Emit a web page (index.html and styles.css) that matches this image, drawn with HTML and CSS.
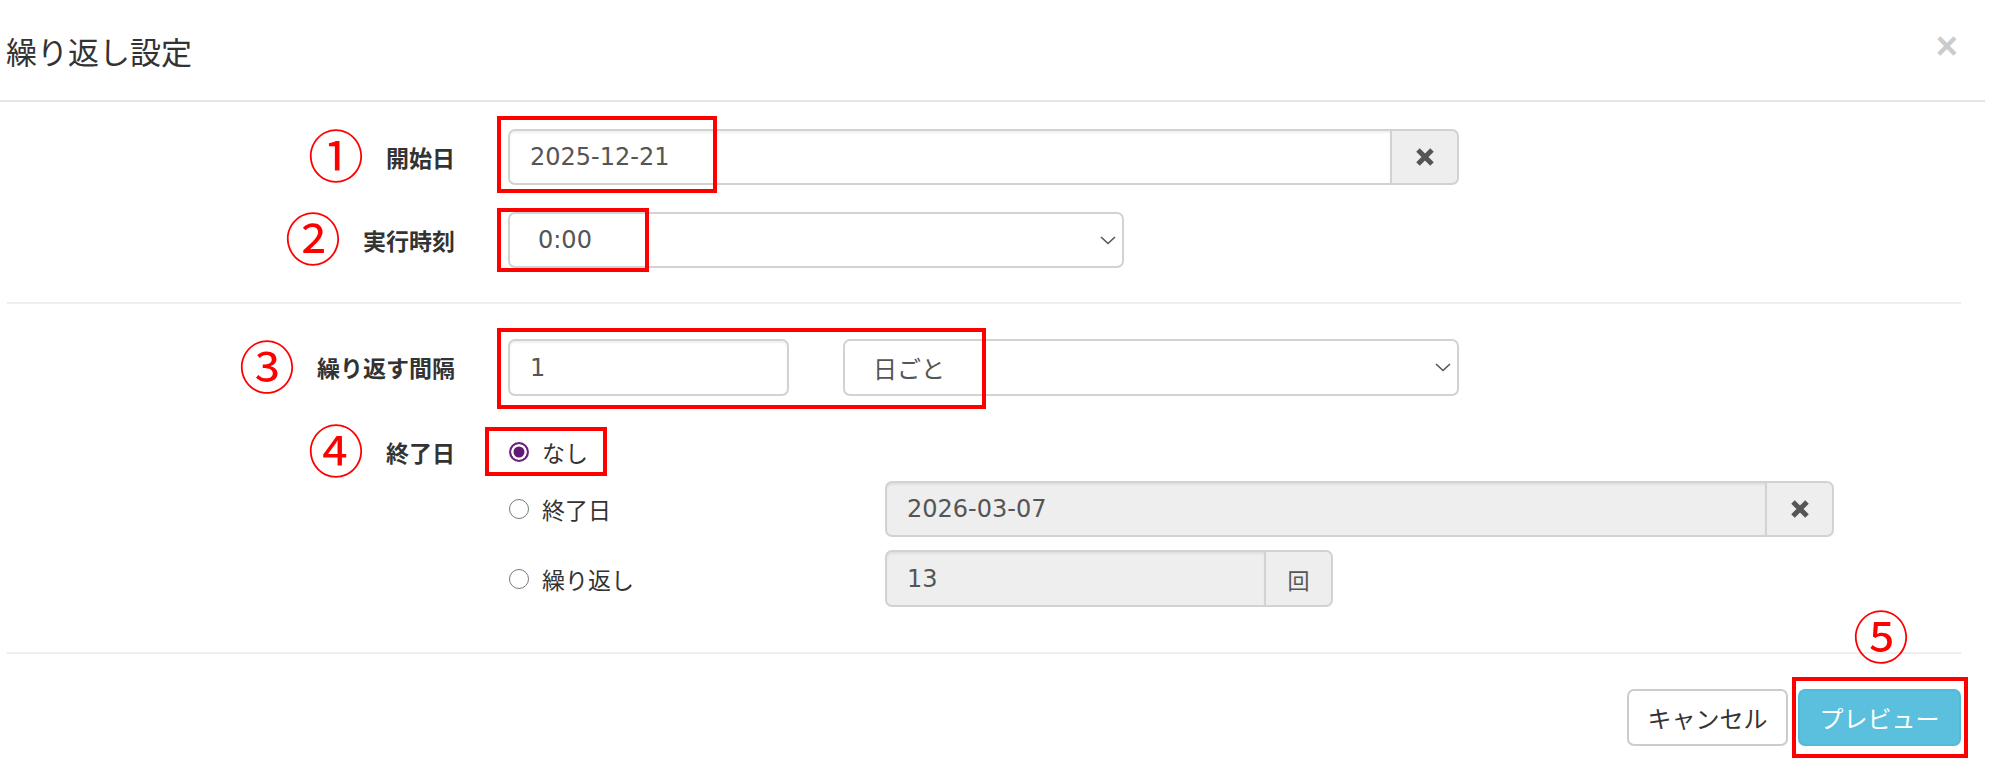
FILE: index.html
```html
<!DOCTYPE html>
<html lang="ja">
<head>
<meta charset="utf-8">
<title>繰り返し設定</title>
<link rel="stylesheet" href="styles.css">
</head>
<body>
<div class="modal">
  <div class="modal-header">
    <h4 class="modal-title">繰り返し設定</h4>
    <span class="close">×</span>
  </div>
  <div class="modal-body">
    <div class="form-row row-start">
      <div class="label-cell"><span class="mark">①</span><span class="label">開始日</span></div>
      <div class="field-cell">
        <div class="input-group w-start">
          <div class="form-control">2025-12-21</div>
          <span class="addon"><svg class="icon-x" viewBox="0 0 20 18" width="20" height="18"><path d="M3 2 L17 16 M17 2 L3 16" stroke="#555" stroke-width="5" fill="none"/></svg></span>
        </div>
        <span class="redbox rb1"></span>
      </div>
    </div>
    <div class="form-row row-time">
      <div class="label-cell"><span class="mark">②</span><span class="label">実行時刻</span></div>
      <div class="field-cell">
        <div class="form-control select w-time">
          <span>0:00</span>
          <svg class="chev" viewBox="0 0 16 9" width="16" height="9"><polyline points="1,1 8,7.5 15,1" stroke="#555" stroke-width="1.6" fill="none"/></svg>
        </div>
        <span class="redbox rb2"></span>
      </div>
    </div>
    <div class="divider"></div>
    <div class="form-row row-interval">
      <div class="label-cell"><span class="mark">③</span><span class="label">繰り返す間隔</span></div>
      <div class="field-cell interval">
        <div class="form-control w-num">1</div>
        <div class="form-control select w-unit">
          <span>日ごと</span>
          <svg class="chev" viewBox="0 0 16 9" width="16" height="9"><polyline points="1,1 8,7.5 15,1" stroke="#555" stroke-width="1.6" fill="none"/></svg>
        </div>
        <span class="redbox rb3"></span>
      </div>
    </div>
    <div class="form-row row-end">
      <div class="label-cell end-label"><span class="mark">④</span><span class="label">終了日</span></div>
      <div class="end-options">
        <div class="opt opt-none">
          <label class="radio-label"><span class="radio checked"></span><span>なし</span></label>
          <span class="redbox rb4"></span>
        </div>
        <div class="opt opt-date">
          <label class="radio-label"><span class="radio"></span><span>終了日</span></label>
          <div class="input-group w-enddate">
            <div class="form-control disabled">2026-03-07</div>
            <span class="addon"><svg class="icon-x" viewBox="0 0 20 18" width="20" height="18"><path d="M3 2 L17 16 M17 2 L3 16" stroke="#555" stroke-width="5" fill="none"/></svg></span>
          </div>
        </div>
        <div class="opt opt-count">
          <label class="radio-label"><span class="radio"></span><span>繰り返し</span></label>
          <div class="input-group w-count">
            <div class="form-control disabled">13</div>
            <span class="addon addon-text">回</span>
          </div>
        </div>
      </div>
    </div>
    <div class="divider divider-bottom"></div>
  </div>
  <div class="modal-footer">
    <button class="btn btn-default">キャンセル</button>
    <span class="btn-wrap">
      <button class="btn btn-info">プレビュー</button>
      <span class="redbox rb5"></span>
      <span class="mark mark5">⑤</span>
    </span>
  </div>
</div>
</body>
</html>
```
FILE: styles.css
```css
html, body {
  margin: 0;
  padding: 0;
  background: #fff;
}
body {
  font-family: "DejaVu Sans", "Noto Sans CJK JP", sans-serif;
  font-size: 24px;
  color: #333;
}
.modal {
  width: 1985px;
  height: 773px;
  overflow: hidden;
}
.modal-header {
  height: 100px;
  border-bottom: 2px solid #e5e5e5;
  display: flex;
  align-items: center;
  justify-content: space-between;
  padding-left: 6px;
}
.modal-title {
  margin: 0;
  font-family: "Noto Sans CJK JP", sans-serif;
  font-weight: normal;
  font-size: 31px;
  line-height: 1;
  color: #333;
}
.close {
  font-family: "Liberation Sans", sans-serif;
  font-weight: bold;
  font-size: 38px;
  line-height: 1;
  color: #cbcbcb;
  margin-right: 27px;
  margin-bottom: 8px;
}
.modal-body {
  padding: 0 24px 0 7px;
}
.form-row {
  display: flex;
  column-gap: 53px;
}
.label-cell {
  width: 448px;
  flex: none;
  display: flex;
  justify-content: flex-end;
  align-items: center;
  column-gap: 22px;
}
.label {
  font-family: "Noto Sans CJK JP", sans-serif;
  font-weight: bold;
  font-size: 23px;
  line-height: 1;
  color: #333;
}
.mark {
  font-family: "Noto Sans CJK JP", sans-serif;
  font-size: 56px;
  line-height: 52px;
  height: 52px;
  color: #ff0000;
  margin-bottom: 8px;
}
.field-cell {
  position: relative;
  display: flex;
}
.row-start {
  margin-top: 27px;
  height: 56px;
}
.row-time {
  margin-top: 27px;
  height: 56px;
}
.divider {
  height: 2px;
  background: #eee;
  margin-top: 34px;
}
.row-interval {
  margin-top: 35px;
  height: 57px;
}
.interval {
  column-gap: 54px;
}
.form-control {
  box-sizing: border-box;
  height: 100%;
  border: 2px solid #d2d2d2;
  border-radius: 7px;
  background: #fff;
  box-shadow: inset 0 2px 2px rgba(0, 0, 0, 0.06);
  padding: 0 20px;
  display: flex;
  align-items: center;
  color: #555;
  font-size: 24px;
}
.select {
  justify-content: space-between;
  padding: 0 6px 0 28px;
  box-shadow: none;
}
.input-group {
  display: flex;
  height: 100%;
}
.input-group .form-control {
  flex: 1;
  border-top-right-radius: 0;
  border-bottom-right-radius: 0;
}
.addon {
  box-sizing: border-box;
  width: 67px;
  flex: none;
  border: 2px solid #d2d2d2;
  border-left: 0;
  border-radius: 0 7px 7px 0;
  background: #eee;
  display: flex;
  align-items: center;
  justify-content: center;
  color: #555;
}
.addon-text {
  font-family: "Noto Sans CJK JP", sans-serif;
  font-size: 22px;
}
.w-start { width: 951px; }
.w-time { width: 616px; }
.w-num { width: 281px; }
.w-unit { width: 616px; }
.w-enddate { width: 949px; height: 56px; }
.w-count { width: 448px; height: 57px; }
.disabled {
  background: #eee;
}
.redbox {
  position: absolute;
  box-sizing: border-box;
  border: 4px solid #ff0000;
}
.rb1 { left: -11px; top: -13px; width: 220px; height: 77px; }
.rb2 { left: -11px; top: -4px; width: 152px; height: 64px; }
.rb3 { left: -11px; top: -11px; width: 489px; height: 81px; }
.rb4 { left: -23px; top: -1px; width: 122px; height: 49px; }
.rb5 { left: -6px; top: -12px; width: 176px; height: 81px; }
.row-end {
  margin-top: 0;
}
.end-label {
  height: 48px;
  margin-top: 32px;
}
.end-options {
  display: flex;
  flex-direction: column;
}
.opt {
  position: relative;
  display: flex;
  align-items: center;
}
.opt-none {
  margin-top: 32px;
  height: 48px;
}
.opt-date {
  margin-top: 5px;
  height: 56px;
}
.opt-count {
  margin-top: 13px;
  height: 57px;
}
.radio-label {
  width: 377px;
  flex: none;
  display: flex;
  align-items: center;
  column-gap: 13px;
  font-family: "Noto Sans CJK JP", sans-serif;
  font-size: 23px;
  color: #333;
}
.radio {
  box-sizing: border-box;
  width: 20px;
  height: 20px;
  margin-left: 1px;
  border-radius: 50%;
  border: 1.5px solid #7a7a7a;
  background: #fff;
}
.radio.checked {
  border: 2px solid #6b1f7f;
  background: #5f1a73;
  box-shadow: inset 0 0 0 2.5px #fff;
}
.divider-bottom {
  margin-top: 45px;
}
.modal-footer {
  display: flex;
  justify-content: flex-end;
  column-gap: 10px;
  padding-right: 24px;
  margin-top: 35px;
}
.btn {
  box-sizing: border-box;
  height: 57px;
  border: 2px solid #ccc;
  border-radius: 7px;
  font-family: "Noto Sans CJK JP", sans-serif;
  font-size: 24px;
  padding: 0;
  display: flex;
  align-items: center;
  justify-content: center;
}
.btn-default {
  width: 161px;
  background: #fff;
  color: #333;
}
.btn-info {
  width: 163px;
  background: #5bc0de;
  border-color: #52bbdc;
  color: #fff;
}
.btn-wrap {
  position: relative;
  display: flex;
}
.mark5 {
  position: absolute;
  left: 55px;
  top: -81px;
  margin: 0;
}
```
